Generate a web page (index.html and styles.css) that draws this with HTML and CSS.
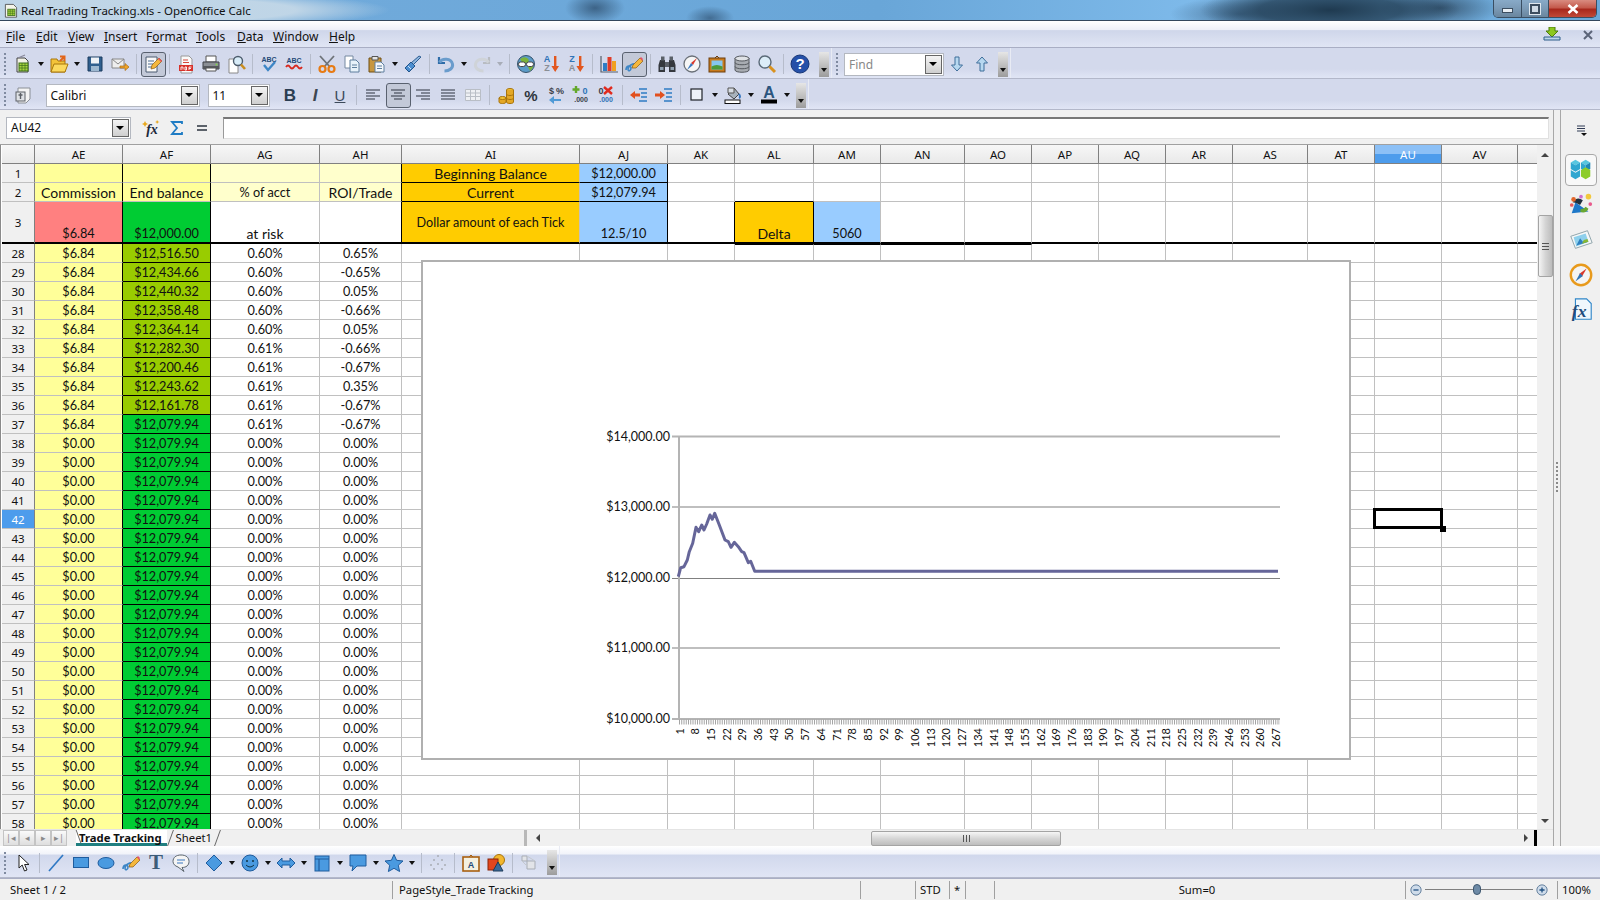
FILE: index.html
```html
<!DOCTYPE html>
<html lang="en">
<head>
  <meta charset="UTF-8" />
  <title>Real Trading Tracking.xls - OpenOffice Calc</title>
  <link rel="stylesheet" href="styles.css">
</head>
<body>

<div class="titlebar">
  <svg class="app-icon" viewBox="0 0 20 20"><path d="M3 3h10l4 4v12H3z" fill="#f4f4e8" stroke="#444"/><rect x="6" y="9" width="9" height="8" fill="#a6d33c" stroke="#3d6e1a"/><path d="M6 11.5h9M6 14.2h9M9 9v8M12 9v8" stroke="#3d6e1a" stroke-width=".7"/></svg>
  <span class="title-text">Real Trading Tracking.xls - OpenOffice Calc</span>
  <div class="win-btns">
    <div class="win-btn win-min"><i></i></div>
    <div class="win-btn win-max"><i></i></div>
    <div class="win-btn win-close">
      <svg viewBox="0 0 12 10" width="12" height="10"><path d="M1.5 1l9 8M10.5 1l-9 8" stroke="#fff" stroke-width="2.6"/></svg>
    </div>
  </div>
</div>

<div class="menubar">
  <span class="m1"><u>F</u>ile</span>
  <span class="m2"><u>E</u>dit</span>
  <span class="m3"><u>V</u>iew</span>
  <span class="m4"><u>I</u>nsert</span>
  <span class="m5">F<u>o</u>rmat</span>
  <span class="m6"><u>T</u>ools</span>
  <span class="m7"><u>D</u>ata</span>
  <span class="m8"><u>W</u>indow</span>
  <span class="m9"><u>H</u>elp</span>
  <svg class="update" viewBox="0 0 18 14" width="18" height="14"><path d="M6 0h6v4h3l-6 6-6-6h3z" fill="#8cc81e" stroke="#4c7d0c"/><path d="M1 10h16v3H1z" fill="#bcd6ea" stroke="#2f5f8a"/></svg>
  <svg class="menu-close" viewBox="0 0 10 10" width="10" height="10"><path d="M1 1l8 8M9 1l-8 8" stroke="#5b6478" stroke-width="2"/></svg>
</div>

<div class="toolrow">
  <div class="bar bar-std">
    <div class="grip"></div>
    <div class="tool"><svg class="ic" viewBox="0 0 20 20"><path d="M4 4h8l3 3v11H4z" fill="#f2f2e6" stroke="#444"/><rect x="6" y="9" width="9" height="8" fill="#a6d33c" stroke="#3d6e1a"/><path d="M6 11.5h9M6 14h9M9 9v8M12 9v8" stroke="#3d6e1a" stroke-width=".7"/><path d="M5 4l7-3" stroke="#889" stroke-width="1.2"/></svg></div>
    <div class="caret"></div>
    <div class="tool"><svg class="ic" viewBox="0 0 20 20"><path d="M2 5h6l1 2h7v11H2z" fill="#f3c33a" stroke="#a8760c"/><path d="M2 18l3-8h14l-3 8z" fill="#fbd95e" stroke="#a8760c"/><path d="M11 7l4-4M15.500 7V2.500H11" fill="none" stroke="#e2661a" stroke-width="2"/></svg></div>
    <div class="caret"></div>
    <div class="tool"><svg class="ic" viewBox="0 0 20 20"><path d="M3 3h14v14H3z" fill="#2f5f8e" stroke="#1c3c5e"/><rect x="6" y="3.500" width="8" height="6" fill="#eef2f6"/><rect x="6" y="12" width="8" height="5" fill="#9db8d0"/></svg></div>
    <div class="tool"><svg class="ic" viewBox="0 0 20 20"><path d="M2 5h12v9H2z" fill="#eee" stroke="#888"/><path d="M2 5l6 5 6-5" fill="none" stroke="#888"/><path d="M10 12h5V9.500l4 3.500-4 3.500V14h-5z" fill="#f0a428" stroke="#a96c10" stroke-width=".7"/></svg></div>
    <div class="sep"></div>
    <div class="tool on"><svg class="ic" viewBox="0 0 20 20"><path d="M3 3h11v15H3z" fill="#f8f8f8" stroke="#4a5a70"/><path d="M5 7h6M5 10h5M5 13h4" stroke="#4a6a90"/><path d="M8 15l1-4 7-7 3 3-7 7z" fill="#f4b73c" stroke="#8a5a10" stroke-width=".7"/><path d="M15 5l1-1 3 3-1 1z" fill="#e8506a"/></svg></div>
    <div class="sep"></div>
    <div class="tool"><svg class="ic" viewBox="0 0 20 20"><path d="M5 2h8l3 3v14H5z" fill="#fafafa" stroke="#999"/><path d="M7 6h5M7 8.500h6" stroke="#d6483a"/><rect x="3" y="11" width="14" height="6" fill="#d8322a"/><path d="M5 13h2v2.500M5 13v3M9 13v3h1.500v-3zM13 13v3M13 13h2.500M13 14.500h2" fill="none" stroke="#fff" stroke-width=".9"/></svg></div>
    <div class="tool"><svg class="ic" viewBox="0 0 20 20"><path d="M5 2h10v6H5z" fill="#fff" stroke="#555"/><path d="M2 8h16v7H2z" fill="#8b8f94" stroke="#3c3f44"/><path d="M2 12h16v3H2z" fill="#55585c"/><circle cx="15.500" cy="10.500" r="1" fill="#7fd04c"/><path d="M5 14h10v3H5z" fill="#fff" stroke="#555"/></svg></div>
    <div class="tool"><svg class="ic" viewBox="0 0 20 20"><path d="M3 5h9v14H3z" fill="#fff" stroke="#8a8a8a"/><circle cx="12" cy="7" r="4.500" fill="#d8ecf8" stroke="#4c5c6c" stroke-width="1.400"/><path d="M15 10.500l4 4.500" stroke="#c98d1e" stroke-width="2.600"/></svg></div>
    <div class="sep"></div>
    <div class="tool"><svg class="ic" viewBox="0 0 20 20"><text x="10" y="8" class="ic-text" fill="#234a78">ABC</text><path d="M5 11l4 5 7-8" fill="none" stroke="#3d86c6" stroke-width="2.400"/></svg></div>
    <div class="tool"><svg class="ic" viewBox="0 0 20 20"><text x="10" y="9" class="ic-text" fill="#234a78">ABC</text><path d="M2 13q2-3 4 0t4 0 4 0 4 0" fill="none" stroke="#d8281e" stroke-width="1.800"/></svg></div>
    <div class="sep"></div>
    <div class="tool"><svg class="ic" viewBox="0 0 20 20"><path d="M3 2l10 11M17 2L7 13" stroke="#6e7378" stroke-width="1.800"/><circle cx="5.500" cy="15" r="3" fill="none" stroke="#e77b14" stroke-width="2.200"/><circle cx="14.500" cy="15" r="3" fill="none" stroke="#e77b14" stroke-width="2.200"/></svg></div>
    <div class="tool"><svg class="ic" viewBox="0 0 20 20"><path d="M3 2h8v12H3z" fill="#fff" stroke="#7488a0"/><path d="M8 6h6l3 3v9H8z" fill="#e8f2fa" stroke="#5e7f9e"/><path d="M10 11h5M10 13.500h5" stroke="#5e7f9e"/></svg></div>
    <div class="tool"><svg class="ic" viewBox="0 0 20 20"><path d="M2 4h12v14H2z" fill="#c8973e" stroke="#6e4e14"/><path d="M5 2.500h6V6H5z" fill="#e4e4e4" stroke="#555"/><path d="M8 8h6l3 3v7H8z" fill="#f4f8fc" stroke="#5e7f9e"/><path d="M10 12h5M10 14.500h5" stroke="#5e7f9e"/></svg></div>
    <div class="caret"></div>
    <div class="tool"><svg class="ic" viewBox="0 0 20 20"><path d="M10 11L18 3l-2-1-8 7z" fill="#8db4dc" stroke="#2f5f94"/><path d="M2 14l6-6 4 4-6 6z" fill="#4c8ed0" stroke="#22558a"/><path d="M5 12l3 3" stroke="#cfe4f6"/></svg></div>
    <div class="sep"></div>
    <div class="tool"><svg class="ic" viewBox="0 0 20 20"><path d="M3 3v6h6" fill="none" stroke="#2e6ca8" stroke-width="2.200"/><path d="M3.500 8.500C6 4 15 4 16.500 10c.8 4-3 7-8 7" fill="none" stroke="#6a9ccc" stroke-width="3"/></svg></div>
    <div class="caret"></div>
    <div class="tool"><svg class="ic" viewBox="0 0 20 20"><path d="M17 3v6h-6" fill="none" stroke="#b8bcc2" stroke-width="2.200"/><path d="M16.500 8.500C14 4 5 4 3.500 10c-.8 4 3 7 8 7" fill="none" stroke="#cfd3d8" stroke-width="3"/></svg></div>
    <div class="caret off"></div>
    <div class="sep"></div>
    <div class="tool"><svg class="ic" viewBox="0 0 20 20"><circle cx="10" cy="10" r="8.500" fill="#5b9bc8" stroke="#36536c"/><path d="M4 5q4-3 7-1t1 4-6 0zM12 13q4-2 5-1t-3 5z" fill="#7cb33a"/><rect x="2.500" y="8" width="7" height="4.500" rx="2.200" fill="#fff" stroke="#444"/><rect x="10.500" y="8" width="7" height="4.500" rx="2.200" fill="#fff" stroke="#444"/></svg></div>
    <div class="tool"><svg class="ic" viewBox="0 0 20 20"><text x="6" y="8" class="ic-text big" fill="#2f74b8">A</text><text x="6" y="17" class="ic-text big" fill="#8a8f96">Z</text><path d="M13 2h2.400v10H18l-3.800 6-3.800-6H13z" fill="#e2561e"/></svg></div>
    <div class="tool"><svg class="ic" viewBox="0 0 20 20"><text x="6" y="8" class="ic-text big" fill="#2f74b8">Z</text><text x="6" y="17" class="ic-text big" fill="#8a8f96">A</text><path d="M13 2h2.400v10H18l-3.800 6-3.800-6H13z" fill="#e2561e"/></svg></div>
    <div class="sep"></div>
    <div class="tool"><svg class="ic" viewBox="0 0 20 20"><path d="M2 2v16h17" fill="none" stroke="#56606c" stroke-width="1.200"/><rect x="4" y="9" width="4" height="8" fill="#2f7cc4"/><rect x="8.500" y="3" width="4" height="14" fill="#e03c28"/><rect x="13" y="7" width="4" height="10" fill="#f0a020"/></svg></div>
    <div class="tool on"><svg class="ic" viewBox="0 0 20 20"><path d="M2 16c0-5 5-5 5-2s-3 4-3 1 6-7 8-4" fill="none" stroke="#3d86c6" stroke-width="1.600"/><path d="M8 14l1-3 7-7 3 3-7 7z" fill="#f4b73c" stroke="#8a5a10" stroke-width=".7"/><path d="M16 4l1-1 2 2-1 2z" fill="#e8506a"/></svg></div>
    <div class="sep"></div>
    <div class="tool"><svg class="ic" viewBox="0 0 20 20"><path d="M3 6h5v12H1.500V11zM12 6h5l1.500 5v7H12z" fill="#34383e"/><rect x="8" y="8" width="4" height="5" fill="#5a6068"/><rect x="4" y="2.500" width="3.500" height="4" fill="#5a6068"/><rect x="12.500" y="2.500" width="3.500" height="4" fill="#5a6068"/><rect x="3" y="13" width="3.500" height="3" fill="#8fa0b0"/><rect x="13.500" y="13" width="3.500" height="3" fill="#8fa0b0"/></svg></div>
    <div class="tool"><svg class="ic" viewBox="0 0 20 20"><circle cx="10" cy="10" r="8" fill="#f6f6f6" stroke="#6a7078" stroke-width="1.300"/><path d="M15 4l-6 5 2 2z" fill="#d8382c"/><path d="M5 16l6-5-2-2z" fill="#3a78c0"/></svg></div>
    <div class="tool"><svg class="ic" viewBox="0 0 20 20"><rect x="2" y="4" width="16" height="14" fill="#c87a1c" stroke="#6e3e0a"/><rect x="4.500" y="6.500" width="11" height="9" fill="#86c6ee"/><path d="M4.500 15.500v-3q5-3 11 0v3z" fill="#4d9a3a"/><path d="M8 4l2-2 2 2" fill="none" stroke="#6e3e0a"/></svg></div>
    <div class="tool"><svg class="ic" viewBox="0 0 20 20"><path d="M3 4v12c0 3 14 3 14 0V4z" fill="#a8acb2" stroke="#55595f"/><ellipse cx="10" cy="4.500" rx="7" ry="2.500" fill="#dfe2e6" stroke="#55595f"/><path d="M3 8.500c0 3 14 3 14 0M3 12.500c0 3 14 3 14 0" fill="none" stroke="#55595f"/></svg></div>
    <div class="tool"><svg class="ic" viewBox="0 0 20 20"><circle cx="8" cy="8" r="6" fill="#dcedf8" stroke="#5a6a78" stroke-width="1.400"/><path d="M12.500 12.500l5.500 5.500" stroke="#d9921e" stroke-width="3"/></svg></div>
    <div class="sep"></div>
    <div class="tool"><svg class="ic" viewBox="0 0 20 20"><circle cx="10" cy="10" r="9" fill="#2550a8" stroke="#173676"/><text x="10" y="15" class="ic-text help" fill="#fff">?</text></svg></div>
    <div class="more"></div>
  </div>
  <div class="bar bar-find">
    <div class="grip"></div>
    <div class="combo find-box"><span class="combo-text">Find</span><div class="combo-btn"></div></div>
    <div class="tool"><svg class="ic" viewBox="0 0 20 20"><path d="M8 3h4v8h3.500L10 17l-5.500-6H8z" fill="#b7d8f0" stroke="#3e6e9a"/></svg></div>
    <div class="tool"><svg class="ic" viewBox="0 0 20 20"><path d="M8 17h4V9h3.500L10 3 4.500 9H8z" fill="#b7d8f0" stroke="#3e6e9a"/></svg></div>
    <div class="more"></div>
  </div>
</div>

<div class="toolrow">
  <div class="bar bar-fmt">
    <div class="grip"></div>
    <div class="tool"><svg class="ic" viewBox="0 0 20 20"><path d="M5 3h12v11l-4 4H5z" fill="#f4f4f4" stroke="#8a8f96"/><rect x="3" y="7" width="9" height="9" fill="#dfe2e6" stroke="#5c6066"/><path d="M7.500 8v6M5.500 10h4" stroke="#5c6066" stroke-width="1.400"/></svg></div>
    <div class="combo font-box"><span class="combo-text">Calibri</span><div class="combo-btn"></div></div>
    <div class="combo size-box"><span class="combo-text">11</span><div class="combo-btn"></div></div>
    <div class="tool"><span class="glyph glyph-b">B</span></div>
    <div class="tool"><span class="glyph glyph-i">I</span></div>
    <div class="tool"><span class="glyph glyph-u">U</span></div>
    <div class="sep"></div>
    <div class="tool"><svg class="ic" viewBox="0 0 20 20"><path d="M3 5h14M3 8h9M3 11h14M3 14h9" stroke="#2e3440" stroke-width="1.100"/></svg></div>
    <div class="tool on"><svg class="ic" viewBox="0 0 20 20"><path d="M3 5h14M6 8h8M3 11h14M6 14h8" stroke="#2e3440" stroke-width="1.100"/></svg></div>
    <div class="tool"><svg class="ic" viewBox="0 0 20 20"><path d="M3 5h14M8 8h9M3 11h14M8 14h9" stroke="#2e3440" stroke-width="1.100"/></svg></div>
    <div class="tool"><svg class="ic" viewBox="0 0 20 20"><path d="M3 5h14M3 8h14M3 11h14M3 14h14" stroke="#2e3440" stroke-width="1.100"/></svg></div>
    <div class="tool"><svg class="ic" viewBox="0 0 20 20"><path d="M2.500 4.500h15v11h-15zM2.500 8h15M2.500 11.500h15M7.500 4.500v11M12.500 4.500v11" fill="#eef0f4" stroke="#b9bec6"/></svg></div>
    <div class="sep"></div>
    <div class="tool"><svg class="ic" viewBox="0 0 20 20"><ellipse cx="14" cy="5" rx="3.500" ry="1.500" fill="#f3c334" stroke="#a8740c"/><path d="M10.500 5v12c0 2 7 2 7 0V5" fill="#e4a826" stroke="#a8740c"/><path d="M10.500 9c0 2 7 2 7 0M10.500 13c0 2 7 2 7 0" fill="none" stroke="#a8740c"/><path d="M3 13v4c0 2 7 2 7 0v-4z" fill="#e4a826" stroke="#a8740c"/><ellipse cx="6.500" cy="13" rx="3.500" ry="1.500" fill="#f3c334" stroke="#a8740c"/></svg></div>
    <div class="tool"><span class="glyph glyph-pct">%</span></div>
    <div class="tool"><svg class="ic" viewBox="0 0 20 20"><text x="5.500" y="9" class="ic-text big" fill="#3a4048">$</text><text x="14" y="9" class="ic-text big" fill="#3a4048">%</text><path d="M15 14H8V11l-5 4 5 4v-3h7z" fill="#4f9ad6"/></svg></div>
    <div class="tool"><svg class="ic" viewBox="0 0 20 20"><path d="M5 1v7M1.500 4.500h7" stroke="#63a82a" stroke-width="2.400"/><text x="14" y="9" class="ic-text big" fill="#2f74b8">0</text><text x="10" y="17" class="ic-text" fill="#3a4048">.000</text></svg></div>
    <div class="tool"><svg class="ic" viewBox="0 0 20 20"><text x="5" y="9" class="ic-text big" fill="#3a4048">0</text><path d="M8 2l8 7M16 2l-8 7" stroke="#e02a1e" stroke-width="2.400"/><text x="10" y="17" class="ic-text" fill="#2f74b8">.000</text></svg></div>
    <div class="sep"></div>
    <div class="tool"><svg class="ic" viewBox="0 0 20 20"><path d="M10 4h8M12 8h6M12 12h6M10 16h8" stroke="#2f7cc4" stroke-width="1.600"/><path d="M1 10l5-4v2.500h5v3H6V14z" fill="#e2501e"/></svg></div>
    <div class="tool"><svg class="ic" viewBox="0 0 20 20"><path d="M10 4h8M12 8h6M12 12h6M10 16h8" stroke="#2f7cc4" stroke-width="1.600"/><path d="M11 10L6 6v2.500H1v3h5V14z" fill="#e2501e"/></svg></div>
    <div class="sep"></div>
    <div class="tool"><svg class="ic" viewBox="0 0 20 20"><rect x="4" y="4" width="11" height="11" fill="#eef2f8" stroke="#1e2228" stroke-width="1.200"/></svg></div>
    <div class="caret"></div>
    <div class="tool"><svg class="ic" viewBox="0 0 20 20"><path d="M5 9l6-6 5 6-5 5z" fill="#a8b2bc" stroke="#444"/><path d="M5 3h6v5H5z" fill="#d9dee4" stroke="#555"/><path d="M16 9q2 3 0 4" stroke="#3a78c0" fill="none" stroke-width="2"/><rect x="2" y="15" width="15" height="3.500" fill="#fff" stroke="#111"/></svg></div>
    <div class="caret"></div>
    <div class="tool"><svg class="ic" viewBox="0 0 20 20"><text x="10" y="13" class="ic-text huge" fill="#2b557e">A</text><rect x="2" y="14.500" width="16" height="4" fill="#000"/></svg></div>
    <div class="caret"></div>
    <div class="more"></div>
  </div>
</div>

<div class="workspace">
  <div class="calc">
    <div class="formula">
      <div class="combo name-box"><span class="combo-text">AU42</span><div class="combo-btn"></div></div>
      <div class="tool fx-first"><svg class="ic" viewBox="0 0 20 20"><text x="10" y="16" class="ic-text fx" fill="#1d2a3a">fx</text><path d="M3 3l1 2 2 1-2 1-1 2-1-2-2-1 2-1zM15 2l1 1.500 1.500.5-1.500.5-1 1.500-.5-1.500-1.500-.5 1.500-.5z" fill="#e8a81e"/></svg></div>
      <div class="tool"><svg class="ic" viewBox="0 0 20 20"><path d="M15 6V4H5l5 6-5 6h10v-2" fill="none" stroke="#1f7cc4" stroke-width="1.800"/></svg></div>
      <div class="tool"><svg class="ic" viewBox="0 0 20 20"><path d="M5 8h10M5 12h10" stroke="#5c626a" stroke-width="2"/></svg></div>
      <div class="formula-input"></div>
    </div>

    <div class="sheet-row">
      <div class="grid-wrap">
        <table class="grid" id="grid">
          <colgroup>
            <col class="w-hdr"><col class="w88"><col class="w88"><col class="w109"><col class="w82"><col class="w178"><col class="w88"><col class="w67"><col class="w79"><col class="w67"><col class="w84"><col class="w67"><col class="w67"><col class="w67"><col class="w67"><col class="w75"><col class="w67"><col class="w67"><col class="w76"><col class="w20">
          </colgroup>
          <tbody id="grid-body"></tbody>
        </table>

        <div class="chart">
          <svg viewBox="423 262 926 496" width="926" height="496">
            <g class="grid-lines">
              <path class="gl-top" d="M672 436.500H1280"/>
              <path d="M672 507H1280M672 578.500H1280M672 648H1280"/>
              <path class="gl-axis" d="M672 719H1280M679 436V719"/>
              <path class="gl-ticks" d="M679 722H1280"/>
            </g>
            <g class="y-labels">
              <text x="670" y="441">$14,000.00</text>
              <text x="670" y="511">$13,000.00</text>
              <text x="670" y="582">$12,000.00</text>
              <text x="670" y="652">$11,000.00</text>
              <text x="670" y="723">$10,000.00</text>
            </g>
            <polyline class="series" points="678.3,576.700 680.700,567.700 684,566.700 687.300,560 689.300,551.700 692.700,543.300 696,527.300 698.700,531.700 701.700,525 704,530 706.700,524 710,515 712.300,519.300 714.700,513.300 719.300,525 725,540 728.300,541.700 731,547.300 734.300,542.300 738.300,546.700 741.700,551.700 744,552.700 748.300,562.700 750.700,561.300 754.700,571.300 1278,571.300"/>
            <g class="x-labels" id="x-labels"></g>
          </svg>
        </div>

        <div class="cell-cursor"><i></i></div>
      </div>
      <div class="vscroll">
        <div class="arrow-up"></div>
        <div class="vthumb"><b></b></div>
        <div class="arrow-down"></div>
      </div>
    </div>

    <div class="tabrow">
      <div class="tabs">
        <div class="tab-nav"><span>|◂</span><span>◂</span><span>▸</span><span>▸|</span></div>
        <div class="tab active">Trade Tracking</div>
        <div class="tab">Sheet1</div>
      </div>
      <div class="hscroll">
        <div class="arrow-left"></div>
        <div class="hthumb"><b></b></div>
        <div class="arrow-right"></div>
      </div>
      <div class="corner"></div>
    </div>
  </div>

  <div class="splitter"></div>

  <div class="deck">
    <div class="deck-menu"><svg viewBox="0 0 12 12" width="12" height="12"><path d="M1 2h8M1 4.500h8M1 7h8" stroke="#2f3a55" stroke-width="1.100"/><path d="M5 9h6l-3 3z" fill="#111"/></svg></div>
    <div class="deck-btn on"><svg viewBox="0 0 28 28" width="26" height="26"><path d="M3 6l5-3 5 3-5 3zM14 6l5-3 5 3-5 3z" fill="#58c6e0"/><path d="M3 6v7l5 3V9zM13 6v7l-5 3V9zM14 6v7l5 3V9z" fill="#2fa6d0"/><path d="M24 6v7l-5 3V9z" fill="#1f88b8"/><path d="M3 14l5 3v7l-5-3zM13 14l-5 3v7l5-3z" fill="#2fa6d0"/><path d="M14 14l5 3v7l-5-3zM24 14l-5 3v7l5-3zM14 14l5-3 5 3-5 3z" fill="#8ccc2a"/></svg></div>
    <div class="deck-btn"><svg viewBox="0 0 28 28" width="26" height="26"><path d="M4 23l4-12 14 10z" fill="#1f78c8"/><path d="M5 11q5-7 11-2l-3 5q-4-3-8-3z" fill="#20303e"/><path d="M13 21q6 3 9-3l-3-2q-2 3-5 2z" fill="#6aa832"/><circle cx="6" cy="8" r="2.500" fill="#e2662a"/><circle cx="14" cy="5" r="2" fill="#cf6fd0"/><circle cx="22" cy="5" r="3" fill="#f2c83e"/><circle cx="24" cy="13" r="2" fill="#e85a8c"/><circle cx="4" cy="14" r="2" fill="#e85a5a"/></svg></div>
    <div class="deck-btn"><svg viewBox="0 0 28 28" width="26" height="26"><path d="M3 10L21 4l5 13-18 6z" fill="#f6f8f8" stroke="#8aa0a8"/><path d="M6 11l13-4 3 9-13 5z" fill="#8ed0ec"/><path d="M9 20l4-8 3 4 2-2 4 2z" fill="#2d7fc0"/><path d="M15 18l7-2-1-3-4 1z" fill="#88b834"/></svg></div>
    <div class="deck-btn"><svg viewBox="0 0 28 28" width="26" height="26"><circle cx="14" cy="14" r="11" fill="#f4f4f4" stroke="#e89a1c" stroke-width="2.600"/><path d="M20 7l-8 6 3 3z" fill="#d8382c"/><path d="M8 21l8-6-3-3z" fill="#2f74b8"/></svg></div>
    <div class="deck-btn"><svg viewBox="0 0 28 28" width="26" height="26"><path d="M8 2h12l5 5v17H8z" fill="#f0f7fc" stroke="#2f86c8" stroke-width="1.200"/><text x="12" y="22" class="ic-text fx-big" fill="#1f4c7c">fx</text></svg></div>
  </div>
</div>

<div class="toolrow draw-row">
  <div class="bar bar-draw">
    <div class="grip"></div>
    <div class="tool"><svg class="ic" viewBox="0 0 20 20"><path d="M6 2v13l3.200-3 2.300 6 2.500-1-2.400-5.500H16z" fill="#fff" stroke="#222"/></svg></div>
    <div class="sep"></div>
    <div class="tool"><svg class="ic" viewBox="0 0 20 20"><path d="M3 18L17 2" stroke="#2f78c4" stroke-width="1.600"/></svg></div>
    <div class="tool"><svg class="ic" viewBox="0 0 20 20"><rect x="2.500" y="4.500" width="15" height="10" fill="#4a9ae0" stroke="#1f5c9e"/></svg></div>
    <div class="tool"><svg class="ic" viewBox="0 0 20 20"><ellipse cx="10" cy="10" rx="8" ry="5.500" fill="#4a9ae0" stroke="#1f5c9e"/></svg></div>
    <div class="tool"><svg class="ic" viewBox="0 0 20 20"><path d="M2 16c0-5 5-5 5-2s-3 4-3 1 6-7 8-4" fill="none" stroke="#3d86c6" stroke-width="1.600"/><path d="M8 14l1-3 7-7 3 3-7 7z" fill="#f4b73c" stroke="#8a5a10" stroke-width=".7"/><path d="M16 4l1-1 2 2-1 2z" fill="#e8506a"/></svg></div>
    <div class="tool"><span class="glyph glyph-t">T</span></div>
    <div class="tool"><svg class="ic" viewBox="0 0 20 20"><path d="M10 2c5 0 8 2.500 8 6.500s-3 6-7 6l2 4-6-4.500C4 13 2 11 2 8.500 2 4.500 5 2 10 2z" fill="#f4f4f4" stroke="#5c666e"/><path d="M6 7h8M6 10h6" stroke="#3a78c0"/></svg></div>
    <div class="sep"></div>
    <div class="tool"><svg class="ic" viewBox="0 0 20 20"><path d="M10 2l8 8-8 8-8-8z" fill="#4a9ae0" stroke="#1f5c9e"/></svg></div>
    <div class="caret"></div>
    <div class="tool"><svg class="ic" viewBox="0 0 20 20"><circle cx="10" cy="10" r="8" fill="#4a9ae0" stroke="#1f5c9e"/><path d="M6 12q4 4 8 0" fill="none" stroke="#134"/><circle cx="7" cy="8" r="1" fill="#134"/><circle cx="13" cy="8" r="1" fill="#134"/></svg></div>
    <div class="caret"></div>
    <div class="tool"><svg class="ic" viewBox="0 0 20 20"><path d="M1 10l5-5v3h8V5l5 5-5 5v-3H6v3z" fill="#4a9ae0" stroke="#1f5c9e"/></svg></div>
    <div class="caret"></div>
    <div class="tool"><svg class="ic" viewBox="0 0 20 20"><rect x="3" y="3" width="14" height="15" fill="#4a9ae0" stroke="#1f5c9e"/><path d="M3 6h14M7 6v12" stroke="#1f5c9e" stroke-width="1.200"/></svg></div>
    <div class="caret"></div>
    <div class="tool"><svg class="ic" viewBox="0 0 20 20"><path d="M2 2h16v11H9l-5 5 1-5H2z" fill="#4a9ae0" stroke="#1f5c9e"/></svg></div>
    <div class="caret"></div>
    <div class="tool"><svg class="ic" viewBox="0 0 20 20"><path d="M10 1.500l2.600 5.800 6.400.7-4.700 4.200 1.300 6.300L10 15.300l-5.600 3.200 1.300-6.300L1 8l6.400-.7z" fill="#4a9ae0" stroke="#1f5c9e"/></svg></div>
    <div class="caret"></div>
    <div class="sep"></div>
    <div class="tool"><svg class="ic" viewBox="0 0 20 20"><g fill="#a8adb5"><circle cx="10" cy="3" r="1"/><circle cx="6" cy="7" r="1"/><circle cx="14" cy="7" r="1"/><circle cx="3" cy="12" r="1"/><circle cx="10" cy="11" r="1"/><circle cx="17" cy="12" r="1"/><circle cx="6" cy="16" r="1"/><circle cx="14" cy="16" r="1"/></g></svg></div>
    <div class="sep"></div>
    <div class="tool"><svg class="ic" viewBox="0 0 20 20"><rect x="2" y="4" width="16" height="14" fill="#f4f0e0" stroke="#a85f10" stroke-width="1.600"/><path d="M8 4l2-2 2 2" fill="none" stroke="#a85f10"/><text x="10" y="15" class="ic-text big" fill="#234a78">A</text></svg></div>
    <div class="tool"><svg class="ic" viewBox="0 0 20 20"><circle cx="13" cy="7" r="5.500" fill="#f2b72e" stroke="#a8740c"/><rect x="2" y="6" width="10" height="11" fill="#e2461e" stroke="#8a2408"/><path d="M12 9l5 9H7z" fill="#3a6a9a" stroke="#1e3c5a"/></svg></div>
    <div class="sep"></div>
    <div class="tool"><svg class="ic" viewBox="0 0 20 20"><path d="M3 3l5 0 0 5-5 0zM8 8l8 0 0 8-8 0z" fill="#e2e4e8" stroke="#a8adb5"/><path d="M3 8l5 5M8 3l8 5" stroke="#c4c8ce"/></svg></div>
    <div class="more"></div>
  </div>
</div>

<div class="statusbar">
  <div class="st st-sheet">Sheet 1 / 2</div>
  <div class="st st-style">PageStyle_Trade Tracking</div>
  <div class="st st-blank1"></div>
  <div class="st st-mode">STD</div>
  <div class="st st-star">*</div>
  <div class="st st-blank2"></div>
  <div class="st st-sum">Sum=0</div>
  <div class="st st-zoom">
    <svg viewBox="0 0 14 14" width="12" height="12"><circle cx="7" cy="7" r="6" fill="#cfdcea" stroke="#4f6f90"/><path d="M4 7h6" stroke="#1f4f80" stroke-width="1.500"/></svg>
    <div class="zoom-track"><i></i></div>
    <svg viewBox="0 0 14 14" width="12" height="12"><circle cx="7" cy="7" r="6" fill="#cfdcea" stroke="#4f6f90"/><path d="M4 7h6M7 4v6" stroke="#1f4f80" stroke-width="1.500"/></svg>
  </div>
  <div class="st st-pct">100%</div>
</div>

<script>
  const cols = ['AE','AF','AG','AH','AI','AJ','AK','AL','AM','AN','AO','AP','AQ','AR','AS','AT','AU','AV',''];
  const body = document.getElementById('grid-body');

  function addRow(head, cells, rowClass) {
    const tr = document.createElement('tr');
    if (rowClass) tr.className = rowClass;
    const th = document.createElement('td');
    th.className = 'row-head' + (head === 42 ? ' sel' : '');
    th.innerText = head;
    tr.appendChild(th);
    cols.forEach(c => {
      const td = document.createElement('td');
      const cell = cells[c];
      if (cell) {
        td.innerText = cell[0];
        td.className = cell[1];
      }
      tr.appendChild(td);
    });
    body.appendChild(tr);
  }

  // column letters
  const hd = document.createElement('tr');
  hd.className = 'col-heads';
  hd.appendChild(document.createElement('td'));
  cols.forEach(c => {
    const td = document.createElement('td');
    td.innerText = c;
    if (c === 'AU') td.className = 'sel';
    hd.appendChild(td);
  });
  body.appendChild(hd);

  addRow(1, {
    AE: ['', 'yel bk-r'], AF: ['', 'yel bk-r'], AG: ['', 'pale'], AH: ['', 'pale bk-r'],
    AI: ['Beginning Balance', 'ora bk-b txt'], AJ: ['$12,000.00', 'blu bk-b bk-r']
  }, 'r1');
  addRow(2, {
    AE: ['Commission', 'yel bk-r txt'], AF: ['End balance', 'yel bk-r txt'], AG: ['% of acct', 'pale'], AH: ['ROI/Trade', 'pale bk-r txt'],
    AI: ['Current', 'ora bk-b txt'], AJ: ['$12,079.94', 'blu bk-b bk-r'], AL: ['', 'bk-b']
  }, 'r2');
  addRow(3, {
    AE: ['$6.84', 'red bk-r'], AF: ['$12,000.00', 'grn bk-r'], AG: ['at risk', 'txt'], AH: ['', 'bk-r'],
    AI: ['Dollar amount of each Tick', 'ora small'], AJ: ['12.5/10', 'blu bk-r'],
    AK: ['', 'bk-r'], AL: ['Delta', 'ora bk-r txt'], AM: ['5060', 'blu']
  }, 'r3');

  const rows = [
    ['$12,516.50','0.60%','0.65%'], ['$12,434.66','0.60%','-0.65%'], ['$12,440.32','0.60%','0.05%'],
    ['$12,358.48','0.60%','-0.66%'], ['$12,364.14','0.60%','0.05%'], ['$12,282.30','0.61%','-0.66%'],
    ['$12,200.46','0.61%','-0.67%'], ['$12,243.62','0.61%','0.35%'], ['$12,161.78','0.61%','-0.67%'],
    ['$12,079.94','0.61%','-0.67%']
  ];
  for (let n = 28; n <= 58; n++) {
    const r = rows[n - 28];
    addRow(n, {
      AE: [r ? '$6.84' : '$0.00', 'yel bk-r'],
      AF: [r ? r[0] : '$12,079.94', (n < 37 ? 'oli' : 'grn') + ' bk-r bk-b'],
      AG: [r ? r[1] : '0.00%', ''],
      AH: [r ? r[2] : '0.00%', '']
    }, n === 28 ? 'r28' : '');
  }

  // chart x axis labels, one every 7 points
  const xl = document.getElementById('x-labels');
  for (let i = 0; i <= 38; i++) {
    const x = 683.5 + i * 15.7;
    const t = document.createElementNS('http://www.w3.org/2000/svg', 'text');
    t.setAttribute('x', x);
    t.setAttribute('y', 728);
    t.setAttribute('transform', `rotate(-90 ${x} 728)`);
    t.textContent = 1 + i * 7;
    xl.appendChild(t);
  }
</script>

</body>
</html>
```
FILE: styles.css
```css
* { box-sizing: border-box; margin: 0; padding: 0; }
html, body { width: 1600px; height: 900px; overflow: hidden; }
body {
  display: flex;
  flex-direction: column;
  font-family: "Noto Sans", sans-serif;
  font-size: 11.5px;
  color: #111;
  background: #f0f0f0;
}

/* title bar */
.titlebar {
  position: relative;
  flex: none;
  height: 21px;
  display: flex;
  align-items: center;
  border-bottom: 1px solid #33475c;
  background:
    radial-gradient(ellipse 130px 26px at 1330px 10px, #1f3a50 0%, rgba(31,58,80,.75) 55%, transparent 100%),
    radial-gradient(ellipse 70px 18px at 1240px 14px, rgba(40,70,100,.6), transparent),
    radial-gradient(ellipse 60px 20px at 1440px 8px, rgba(30,50,70,.7), transparent),
    radial-gradient(ellipse 30px 16px at 595px 8px, rgba(40,70,100,.7), transparent),
    radial-gradient(ellipse 24px 12px at 710px 18px, rgba(40,70,100,.6), transparent),
    radial-gradient(ellipse 270px 20px at 120px 10px, rgba(200,218,232,.9) 65%, transparent),
    linear-gradient(90deg, #74acdc 0%, #69a6d8 55%, #7ebaea 75%, #6ba8d8 100%);
}
.app-icon { width: 16px; height: 16px; margin-left: 3px; }
.title-text {
  margin-left: 2px;
  font-family: "Noto Sans", sans-serif;
  font-size: 11.5px;
  color: #111;
  white-space: nowrap;
}
.win-btns {
  position: absolute;
  top: 0;
  right: 3px;
  height: 18px;
  display: flex;
  border: 1px solid #3a4e62;
  border-top: none;
  border-radius: 0 0 5px 5px;
  overflow: hidden;
}
.win-btn {
  height: 100%;
  display: flex;
  align-items: center;
  justify-content: center;
  border-right: 1px solid #3a4e62;
  background: linear-gradient(#88aac8, #7b9ab6 50%, #6a869e);
}
.win-min { width: 28px; }
.win-max { width: 27px; }
.win-close { width: 47px; border-right: none; background: linear-gradient(#d98c80, #c45a4c 45%, #a8281c 55%, #c04a38); }
.win-min i { display: block; width: 11px; height: 5px; margin-top: 3px; background: #e8eef4; border: 1px solid #3c4e60; }
.win-max i { display: block; width: 10px; height: 10px; background: #cfdbe6; border: 2px solid #3c4e60; outline: 1px solid #dfe8f0; }

/* menu */
.menubar {
  position: relative;
  flex: none;
  height: 27px;
  display: flex;
  align-items: center;
  border-bottom: 1px solid #a9aec4;
  background: linear-gradient(#fff, #eef0f8 33%, #cfd6ea 37%, #e0e5f4);
  font-size: 12px;
}
.menubar span { position: absolute; top: 7px; }
.m1 { left: 6px; } .m2 { left: 36px; } .m3 { left: 68px; } .m4 { left: 104px; } .m5 { left: 146px; }
.m6 { left: 196px; } .m7 { left: 237px; } .m8 { left: 273px; } .m9 { left: 329px; }
.update { position: absolute; left: 1543px; top: 6px; }
.menu-close { position: absolute; left: 1583px; top: 9px; }

/* toolbars */
.toolrow {
  flex: none;
  height: 31px;
  display: flex;
  background: linear-gradient(#d3d9ec 70%, #e0e5f5);
  border-bottom: 1px solid #b3b8ca;
}
.bar { display: flex; align-items: center; height: 100%; padding-top: 2px; border-right: 1px solid #e8ebf4; }
.bar-std { width: 832px; }
.bar-find { width: 179px; }
.bar-fmt { width: 809px; }
.bar-draw { width: 560px; }
.draw-row { height: 32px; background: linear-gradient(#fff, #f2f4fa 25%, #d1d8ec 30%, #e0e5f5); }
.grip { flex: none; width: 4.5px; height: 22px; margin-left: 4px; border-left: 2px dotted #7f8aa0; box-sizing: content-box; }
.tool {
  flex: none;
  width: 25px;
  height: 25px;
  display: flex;
  align-items: center;
  justify-content: center;
  border: 1px solid transparent;
  border-radius: 3px;
}
.tool.on { border-color: #59616f; background: #c3c9d8; }
.ic { width: 20px; height: 20px; display: block; }
.ic-text { font-family: "Liberation Sans", sans-serif; font-size: 7px; font-weight: bold; text-anchor: middle; }
.ic-text.big { font-size: 9px; }
.ic-text.huge { font-size: 16px; }
.ic-text.help { font-size: 15px; }
.ic-text.fx { font-family: "Liberation Serif", serif; font-style: italic; font-size: 14px; }
.ic-text.fx-big { font-family: "Liberation Serif", serif; font-style: italic; font-size: 19px; }
.glyph { font-family: "Liberation Sans", sans-serif; color: #2b3e52; line-height: 1; }
.glyph-b { font-size: 17px; font-weight: bold; }
.glyph-i { font-size: 17px; font-style: italic; font-weight: bold; color: #3c4650; }
.glyph-u { font-size: 15px; text-decoration: underline; color: #3c4a5a; }
.glyph-pct { font-size: 15px; font-weight: bold; color: #30363e; }
.glyph-t { font-family: "Liberation Serif", serif; font-size: 21px; font-weight: bold; color: #3c5c78; }
.sep { flex: none; width: 8px; display: flex; justify-content: center; }
.sep::after { content: ""; width: 1px; height: 20px; background: #b6bccb; }
.caret { flex: none; width: 11px; display: flex; justify-content: center; }
.caret::after { content: ""; border: 3px solid transparent; border-top: 4px solid #111; border-bottom: none; }
.caret.off::after { border-top-color: #a8adb8; }
.more {
  flex: none;
  width: 10px;
  height: 25px;
  margin-left: auto;
  margin-right: 2px;
  position: relative;
  background: linear-gradient(#e6e6e6, #9c9c9c);
}
.more::after {
  content: "";
  position: absolute;
  left: 2px;
  bottom: 5px;
  border: 3px solid transparent;
  border-top: 4px solid #111;
  border-bottom: none;
}

/* combo boxes */
.combo {
  flex: none;
  height: 23px;
  display: flex;
  align-items: center;
  background: #fff;
  border: 1px solid #b4b8c0;
  padding: 1px;
}
.combo-text { flex: 1; padding-left: 3px; font-size: 12px; }
.combo-btn {
  position: relative;
  flex: none;
  width: 17px;
  height: 100%;
  background: linear-gradient(#f4f4f4, #cfcfcf);
  border: 1px solid #666;
}
.combo-btn::after {
  content: "";
  position: absolute;
  left: 3px;
  top: 6px;
  border: 4px solid transparent;
  border-top: 4px solid #000;
  border-bottom: none;
}
.font-box { width: 154px; margin-left: 10px; }
.size-box { width: 62px; margin-left: 8px; margin-right: 8px; }
.find-box { width: 100px; margin-left: 1.5px; }
.find-box .combo-text { color: #888; }
.name-box { width: 125px; height: 22px; margin-left: 6px; }

/* workspace */
.workspace { flex: 1; display: flex; min-height: 0; }
.calc { width: 1553px; display: flex; flex-direction: column; }
.formula {
  flex: none;
  height: 35px;
  padding-top: 1px;
  display: flex;
  align-items: center;
  background: #f0f0f0;
  border-bottom: 1px solid #a0a0a0;
}
.fx-first { margin-left: 8px; }
.formula-input {
  flex: 1;
  height: 22px;
  margin-left: 8.5px;
  margin-right: 4px;
  background: #fff;
  border: 1px solid #e0e0e0;
  border-top: 2px solid #777;
  border-left: 1px solid #999;
}
.sheet-row { flex: 1; display: flex; min-height: 0; }
.grid-wrap {
  position: relative;
  width: 1537px;
  overflow: hidden;
  background: #fff;
  padding-left: 1px;
  border-left: 1px solid #8a8a8a;
}

/* grid */
.grid {
  table-layout: fixed;
  width: 1536px;
  border-collapse: separate;
  border-spacing: 0;
  font-family: Lato, sans-serif;
  font-size: 12.7px;
  color: #111;
}
.w-hdr { width: 33px; } .w88 { width: 88px; } .w109 { width: 109px; } .w82 { width: 82px; } .w178 { width: 178px; }
.w67 { width: 67px; } .w79 { width: 79px; } .w84 { width: 84px; } .w75 { width: 75px; } .w76 { width: 76px; } .w20 { width: 20px; }
.grid td {
  height: 19px;
  padding: 1px 0 0;
  text-align: center;
  white-space: nowrap;
  overflow: hidden;
  line-height: 17px;
  border-right: 1px solid #c0c0c0;
  border-bottom: 1px solid #c0c0c0;
}
.grid td.txt { font-size: 14px; }
.col-heads td {
  font-family: "Noto Sans", sans-serif;
  font-size: 11.5px;
  background: linear-gradient(#f7f7f7, #e9e9e9);
  border-right: 1px solid #808080;
  border-bottom: 1px solid #808080;
}
.col-heads td.sel { background: linear-gradient(#8cc0f6 50%, #4d9cec 50%); color: #fff; }
.grid td.row-head {
  font-family: "Noto Sans", sans-serif;
  font-size: 11.5px;
  background: #f0f0f0;
  border-right: 1px solid #808080;
}
.grid td.row-head.sel { background: #4d9cec; color: #fff; }
.r1 td { height: 18px; }
.r2 td { height: 19px; }
.r3 td { height: 42px; vertical-align: bottom; border-bottom: 2px solid #000; }
.r3 td.row-head { vertical-align: middle; }
.r3 td.small { font-size: 12.6px; vertical-align: middle; }
.r28 td:nth-child(n+9):nth-child(-n+12) { border-top: 1px solid #000; }
.grid td.yel { background: #ffff99; }
.grid td.pale { background: #ffffcc; }
.grid td.red { background: #ff8080; }
.grid td.grn { background: #00cc33; }
.grid td.oli { background: #99cc00; }
.grid td.ora { background: #ffcc00; }
.grid td.blu { background: #99ccff; }
.grid td.bk-r { border-right-color: #000; }
.grid td.bk-b { border-bottom-color: #000; }

/* chart object */
.chart {
  position: absolute;
  left: 420px;
  top: 115px;
  width: 930px;
  height: 500px;
  background: #fff;
  border: 2px solid #b0b0b0;
}
.chart svg { display: block; }
.grid-lines path { fill: none; stroke: #808080; stroke-width: 1.200; }
.grid-lines .gl-top, .grid-lines .gl-axis { stroke: #b4b4b4; stroke-width: 2; }
.grid-lines .gl-ticks { stroke: #a4a4a4; stroke-width: 5; stroke-dasharray: 1 1.250; }
.y-labels text { font-family: Lato, sans-serif; font-size: 12.5px; text-anchor: end; fill: #111; }
.x-labels text { font-family: Lato, sans-serif; font-size: 11px; text-anchor: end; fill: #111; }
.series { fill: none; stroke: #666699; stroke-width: 3; stroke-linejoin: round; }

.cell-cursor {
  position: absolute;
  left: 1372px;
  top: 363px;
  width: 70px;
  height: 21px;
  border: 3px solid #000;
}
.cell-cursor i { position: absolute; right: -6px; bottom: -6px; width: 6px; height: 6px; background: #000; }

/* scrollbars */
.vscroll {
  width: 16px;
  display: flex;
  flex-direction: column;
  align-items: center;
  background: #f0f0f0;
  padding-top: 8px;
}
.arrow-up { border: 4px solid transparent; border-bottom: 4px solid #444; border-top: none; }
.arrow-down { margin-top: auto; margin-bottom: 6px; border: 4px solid transparent; border-top: 4px solid #444; border-bottom: none; }
.vthumb {
  width: 15px;
  height: 62px;
  margin-top: 58px;
  display: flex;
  align-items: center;
  justify-content: center;
  background: linear-gradient(90deg, #f4f4f4, #d4d4d4 50%, #bcbcbc);
  border: 1px solid #a4a4a4;
  border-radius: 2px;
}
.vthumb b { width: 7px; height: 7px; border-top: 1px solid #555; border-bottom: 1px solid #555; background: linear-gradient(#555, #555) 0 2px/7px 1px no-repeat; }
.tabrow { flex: none; height: 17px; display: flex; background: #f0f0f0; border-top: 1px solid #e4e4e4; }
.tabs { position: relative; width: 527px; display: flex; align-items: stretch; border-right: 3px solid #b8b8b8; }
.tab-nav { width: 77px; display: flex; padding-left: 3px; }
.tab-nav span {
  width: 16px;
  font-size: 9px;
  line-height: 14px;
  text-align: center;
  color: #8a8a8a;
  background: linear-gradient(#fafafa, #dedede);
  border: 1px solid #c4c4c4;
}
.tab {
  position: relative;
  z-index: 0;
  padding: 0 8px;
  margin-right: 1px;
  line-height: 15px;
  font-family: "Noto Sans", sans-serif;
  font-size: 11.3px;
}
.tab::before {
  content: "";
  position: absolute;
  z-index: -1;
  inset: 0 2px 0 2px;
  transform: skewX(-20deg);
  border-left: 1px solid #666;
  border-right: 1px solid #666;
  background: #f0f0f0;
}
.tab.active { font-weight: bold; font-size: 11.3px; padding: 0 5px 0 3px; border-bottom: 3px solid #1f7f80; margin-left: -1px; background: #fff; }
.tab.active::before { transform: skewX(20deg); background: transparent; border-right-color: #fff; }
.hscroll { flex: 1; display: flex; align-items: center; padding-left: 9px; border-right: 3px solid #000; }
.arrow-left { border: 4px solid transparent; border-right: 4px solid #444; border-left: none; }
.arrow-right { margin-left: auto; margin-right: 6px; border: 4px solid transparent; border-left: 4px solid #444; border-right: none; }
.hthumb {
  width: 190px;
  height: 15px;
  margin-left: 331px;
  display: flex;
  align-items: center;
  justify-content: center;
  background: linear-gradient(#f6f6f6, #d6d6d6 50%, #bdbdbd);
  border: 1px solid #a4a4a4;
  border-radius: 2px;
}
.hthumb b { width: 7px; height: 7px; border-left: 1px solid #555; border-right: 1px solid #555; background: linear-gradient(#555, #555) 2px 0/1px 7px no-repeat; }
.corner { width: 16px; flex: none; }

/* right deck */
.splitter { position: relative; width: 7px; background: #f0f0f0; border-left: 1px solid #a8a8a8; }
.splitter::after {
  content: "";
  position: absolute;
  left: 2px;
  top: 352px;
  height: 30px;
  border-left: 2px dotted #8a8a8a;
}
.deck {
  width: 40px;
  display: flex;
  flex-direction: column;
  align-items: center;
  background: #f0f0f0;
  border-left: 1px solid #a8a8a8;
}
.deck-menu { height: 44px; padding-top: 14px; margin-left: 2px; }
.deck-btn {
  flex: none;
  width: 32px;
  height: 32px;
  margin-bottom: 3px;
  display: flex;
  align-items: center;
  justify-content: center;
  border: 1px solid transparent;
  border-radius: 4px;
}
.deck-btn.on { border-color: #a8a8a8; background: #f8f8f8; }

/* status bar */
.statusbar {
  flex: none;
  height: 22px;
  display: flex;
  align-items: center;
  background: #f0f0f0;
  border-top: 1px solid #a9aec4;
  font-size: 11.3px;
}
.st { height: 18px; line-height: 18px; border-left: 1px solid #a0a0a0; white-space: nowrap; }
.st-sheet { width: 392px; padding-left: 10px; border-left: none; }
.st-style { width: 468px; padding-left: 6px; }
.st-blank1 { width: 55px; }
.st-mode { width: 34px; padding-left: 4px; }
.st-star { width: 16px; padding-left: 4px; }
.st-blank2 { width: 29px; }
.st-sum { width: 411px; padding-right: 6px; text-align: center; }
.st-zoom { width: 152px; display: flex; align-items: center; padding-left: 4px; }
.zoom-track {
  position: relative;
  width: 108px;
  height: 1px;
  margin: 0 3px;
  background: #808080;
}
.zoom-track i {
  position: absolute;
  left: 48px;
  top: -5px;
  width: 8px;
  height: 11px;
  border-radius: 4px;
  background: #6d8aa6;
  border: 1px solid #3f5870;
}
.st-pct { flex: 1; padding-left: 4px; }
```
